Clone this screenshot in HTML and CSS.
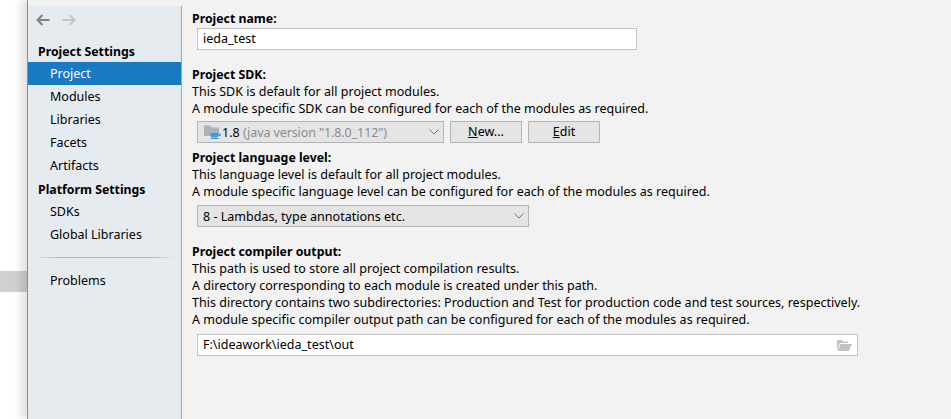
FILE: index.html
```html
<!DOCTYPE html>
<html lang="en">
<head>
<meta charset="utf-8">
<title>Project Structure</title>
<link rel="stylesheet" href="styles.css">
</head>
<body>
<div class="backdrop"><div class="backdrop-bar"></div></div>
<div class="dialog">
  <div class="top-strip"></div>
  <div class="main">
    <aside class="sidebar">
      <div class="nav-arrows">
        <svg class="arrow" width="14" height="12" viewBox="0 0 14 12"><path d="M1.5 6H13.5M6.5 1L1.5 6L6.5 11" fill="none" stroke="#7d8287" stroke-width="2"/></svg>
        <svg class="arrow" width="14" height="12" viewBox="0 0 14 12"><path d="M0.5 6H12.5M7.5 1L12.5 6L7.5 11" fill="none" stroke="#c2c6ca" stroke-width="2"/></svg>
      </div>
      <div class="nav-heading first">Project Settings</div>
      <div class="nav-item selected">Project</div>
      <div class="nav-item">Modules</div>
      <div class="nav-item">Libraries</div>
      <div class="nav-item">Facets</div>
      <div class="nav-item">Artifacts</div>
      <div class="nav-heading">Platform Settings</div>
      <div class="nav-item">SDKs</div>
      <div class="nav-item">Global Libraries</div>
      <div class="nav-sep"></div>
      <div class="nav-item">Problems</div>
    </aside>
    <main class="content">
      <div class="label">Project name:</div>
      <div class="input name-input">ieda_test</div>

      <div class="label sdk-label">Project SDK:</div>
      <div class="line">This SDK is default for all project modules.</div>
      <div class="line">A module specific SDK can be configured for each of the modules as required.</div>
      <div class="sdk-row">
        <div class="select sdk-select">
          <svg class="sdk-icon" width="17" height="16" viewBox="0 0 17 16"><path d="M0 1.5H6L8 3.5H15V12H0Z" fill="#aab3bb"/><path d="M6.500 9H14.500V11.500A2 2 0 0 1 12.500 13.500H8.500A2 2 0 0 1 6.500 11.500Z" fill="#3d9ad6"/><path d="M6.500 14.500H14.500" stroke="#3d9ad6"/><path d="M14.500 10H16.500V11.500H14.500" fill="none" stroke="#3d9ad6"/></svg>
          <span class="sdk-name">1.8</span>&nbsp;<span class="sdk-version">(java version "1.8.0_112")</span>
          <svg class="chevron" width="10" height="6" viewBox="0 0 10 6"><path d="M0.500 0.500L5 5L9.500 0.500" fill="none" stroke="#7a7a7a" stroke-width="1"/></svg>
        </div>
        <div class="button new-button"><span class="mnemonic">N</span>ew...</div>
        <div class="button edit-button"><span class="mnemonic">E</span>dit</div>
      </div>

      <div class="label level-label">Project language level:</div>
      <div class="line">This language level is default for all project modules.</div>
      <div class="line">A module specific language level can be configured for each of the modules as required.</div>
      <div class="select level-select">
        8 - Lambdas, type annotations etc.
        <svg class="chevron" width="10" height="6" viewBox="0 0 10 6"><path d="M0.500 0.500L5 5L9.500 0.500" fill="none" stroke="#7a7a7a" stroke-width="1"/></svg>
      </div>

      <div class="label output-label">Project compiler output:</div>
      <div class="line">This path is used to store all project compilation results.</div>
      <div class="line">A directory corresponding to each module is created under this path.</div>
      <div class="line">This directory contains two subdirectories: Production and Test for production code and test sources, respectively.</div>
      <div class="line">A module specific compiler output path can be configured for each of the modules as required.</div>
      <div class="input output-input">F:\ideawork\ieda_test\out
        <svg class="folder" width="15" height="11" viewBox="0 0 15 11"><path d="M0 0H5L6 1.500H11V3H3L0 10.500ZM3.500 4H15L12 11H0.500Z" fill="#c0c4c7"/></svg>
      </div>
    </main>
  </div>
</div>
</body>
</html>
```
FILE: styles.css
```css
* { box-sizing: border-box; }
html, body { margin: 0; height: 100%; }
body {
  display: flex;
  width: 951px;
  height: 419px;
  overflow: hidden;
  background: #fff;
  font-family: "Noto Sans", "Open Sans", sans-serif;
  font-size: 12.5px;
  color: #000;
}
.backdrop {
  width: 27px;
  flex: none;
  padding-top: 271px;
}
.backdrop-bar { height: 21px; background: #d0d0d0; }
.dialog {
  flex: 1;
  display: flex;
  flex-direction: column;
  border-left: 1px solid #8c8c8c;
  background: #f2f2f2;
  box-shadow: -6px 0 8px rgba(0,0,0,.12);
}
.top-strip { height: 6px; }
.main { flex: 1; display: flex; min-height: 0; }
.sidebar {
  width: 154px;
  flex: none;
  background: #e6ebf0;
  border-right: 1px solid #a8a8a8;
}
.nav-arrows {
  display: flex;
  gap: 12px;
  padding: 8px 0 0 8px;
  height: 32px;
}
.nav-heading {
  height: 23px;
  line-height: 23px;
  padding: 1px 0 0 10px;
  font-weight: 700;
  font-size: 12.3px;
}
.nav-heading.first { margin-top: 1px; }
.nav-item {
  height: 23px;
  line-height: 23px;
  padding-left: 22px;
}
.nav-item.selected { background: #197ac4; color: #fff; }
.nav-sep {
  height: 1px;
  margin: 11px 5px 11px 7px;
  background: linear-gradient(90deg, #e6ebf0, #b4b8bc 15%, #b4b8bc 85%, #e6ebf0);
}
.content { flex: 1; padding: 4px 0 0 10px; letter-spacing: .015px; }
.label { font-weight: 700; font-size: 12.3px; height: 17px; line-height: 17px; letter-spacing: 0; }
.line { height: 17px; line-height: 17px; white-space: nowrap; }
.input {
  background: #fff;
  border: 1px solid #c4c4c4;
  height: 22px;
  line-height: 20px;
  padding-left: 5px;
  margin-left: 5px;
}
.name-input { width: 440px; margin-top: 1px; }
.sdk-label { margin-top: 16px; }
.sdk-row { display: flex; margin: 4px 0 0 5px; gap: 6px; }
.select {
  position: relative;
  display: flex;
  align-items: center;
  height: 22px;
  background: #e4e4e4;
  border: 1px solid #b4b4b4;
  padding-left: 5px;
}
.sdk-select { width: 247px; padding-left: 6px; }
.sdk-icon { margin-right: 1px; flex: none; }
.sdk-version { color: #8c8c8c; letter-spacing: -.1px; }
.chevron { position: absolute; right: 4px; top: 7px; }
.button {
  height: 22px;
  line-height: 20px;
  width: 72px;
  text-align: center;
  background: #e4e4e4;
  border: 1px solid #b4b4b4;
}
.mnemonic { text-decoration: underline; }
.level-label { margin-top: 6px; }
.level-select { width: 332px; margin: 5px 0 0 5px; }
.output-label { margin-top: 16px; }
.output-input { position: relative; width: 661px; margin-top: 6px; }
.folder { position: absolute; right: 5px; top: 5px; }
```
